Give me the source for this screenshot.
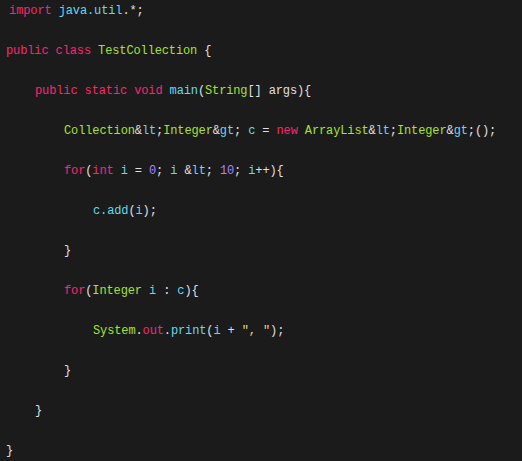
const R = "text-[#f92672]";
const G = "text-[#a6e22e]";
const C = "text-[#66d9ef]";
const P = "text-[#ae81ff]";
const Y = "text-[#e6db74]";
const W = "text-[#e0e0e0]";

function Line({ indent = 0, parts, first }) {
  const pad = ["pl-[6px]", "pl-[35px]", "pl-[64px]", "pl-[93px]"][indent];
  return (
    <div className={`h-[20px] leading-[20px] whitespace-pre ${first ? "pl-[2px]" : pad}`}>
      {parts.map(([c, t], i) => (
        <span key={i} className={c}>{t}</span>
      ))}
    </div>
  );
}

function Blank() {
  return <div className="h-[20px]" />;
}

export default function App() {
  return (
    <div
      className="w-[522px] h-[461px] bg-[#1b1b1b] text-[12px] tracking-[-0.12px] pt-[1px] overflow-hidden"
      style={{ fontFamily: '"Liberation Mono", "Courier New", monospace' }}
    >
      <Line first parts={[[R, " import"], [W, " "], [C, "java.util"], [W, ".*;"]]} />
      <Blank />
      <Line parts={[[R, "public class "], [G, "TestCollection"], [W, " {"]]} />
      <Blank />
      <Line indent={1} parts={[[R, "public static void "], [C, "main"], [W, "("], [G, "String"], [W, "[] args){"]]} />
      <Blank />
      <Line
        indent={2}
        parts={[
          [G, "Collection"], [W, "&"], [C, "lt"], [W, ";"], [G, "Integer"], [W, "&"], [C, "gt"], [W, "; "],
          [C, "c"], [W, " = "], [R, "new "], [G, "ArrayList"], [W, "&"], [C, "lt"], [W, ";"], [G, "Integer"],
          [W, "&"], [C, "gt"], [W, ";();"],
        ]}
      />
      <Blank />
      <Line
        indent={2}
        parts={[
          [R, "for"], [W, "("], [R, "int"], [C, " i"], [W, " = "], [P, "0"], [W, "; "], [C, "i"], [W, " &"],
          [C, "lt"], [W, "; "], [P, "10"], [W, "; "], [C, "i"], [W, "++){"],
        ]}
      />
      <Blank />
      <Line indent={3} parts={[[C, "c.add"], [W, "("], [C, "i"], [W, ");"]]} />
      <Blank />
      <Line indent={2} parts={[[W, "}"]]} />
      <Blank />
      <Line indent={2} parts={[[R, "for"], [W, "("], [G, "Integer"], [C, " i"], [W, " : "], [C, "c"], [W, "){"]]} />
      <Blank />
      <Line
        indent={3}
        parts={[[G, "System"], [W, "."], [R, "out"], [W, "."], [C, "print"], [W, "("], [C, "i"], [W, " + "], [Y, "\", \""], [W, ");"]]}
      />
      <Blank />
      <Line indent={2} parts={[[W, "}"]]} />
      <Blank />
      <Line indent={1} parts={[[W, "}"]]} />
      <Blank />
      <Line parts={[[W, "}"]]} />
    </div>
  );
}
